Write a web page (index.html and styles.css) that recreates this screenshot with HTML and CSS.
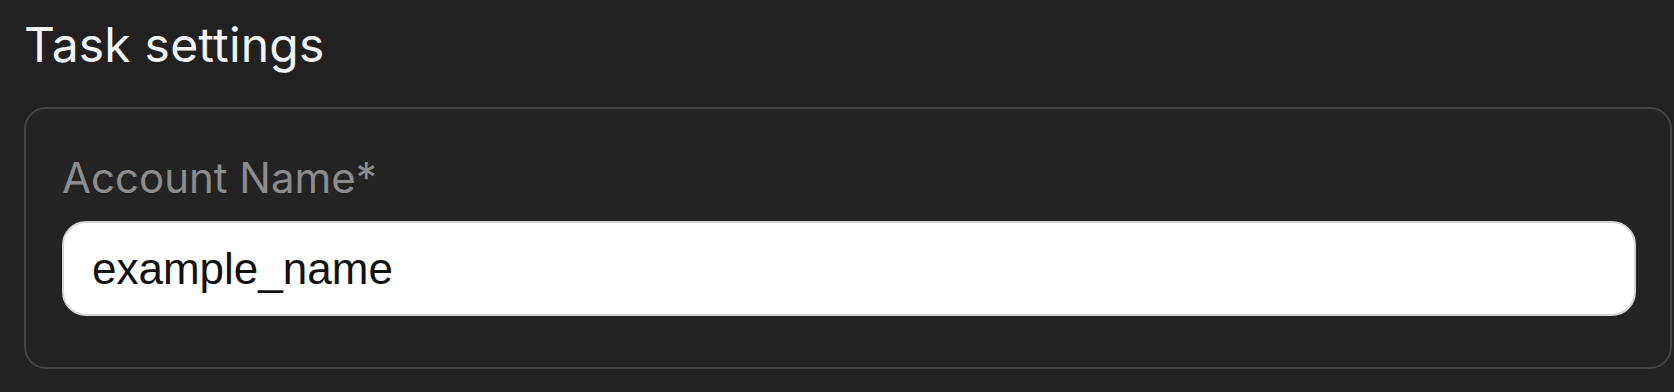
FILE: index.html
```html
<!DOCTYPE html>
<html lang="en">
<head>
<meta charset="utf-8">
<title>Task settings</title>
<link rel="stylesheet" href="styles.css">
</head>
<body>
  <div class="page">
    <h1 class="title">Task settings</h1>
    <div class="card">
      <label class="field-label" for="account">Account Name*</label>
      <input id="account" class="field-input" type="text" value="example_name">
    </div>
  </div>
</body>
</html>
```

FILE: styles.css
```css
html, body {
  margin: 0;
  padding: 0;
  background-color: #212121;
}

.page {
  padding: 16px 2px 0 24px;
  font-family: Inter, "Noto Sans", sans-serif;
}

.title {
  margin: 0;
  font-size: 48px;
  font-weight: 400;
  line-height: 58px;
  color: #f4f4f4;
  letter-spacing: 0.2px;
}

/* Bordered settings box */
.card {
  margin-top: 33px;
  padding: 44px 34px 51px 36px;
  border: 2px solid #444444;
  border-radius: 22px;
  background-color: #232323;
  display: flex;
  flex-direction: column;
}

.field-label {
  font-size: 42px;
  line-height: 50px;
  color: #8c8c8c;
}

.field-input {
  margin-top: 18px;
  height: 95px;
  box-sizing: border-box;
  padding: 0 28px;
  border: 2px solid #d4d4d4;
  border-radius: 24px;
  background-color: #ffffff;
  font-family: "Liberation Sans", Arial, sans-serif;
  font-size: 44px;
  color: #111111;
  outline: none;
}
```
